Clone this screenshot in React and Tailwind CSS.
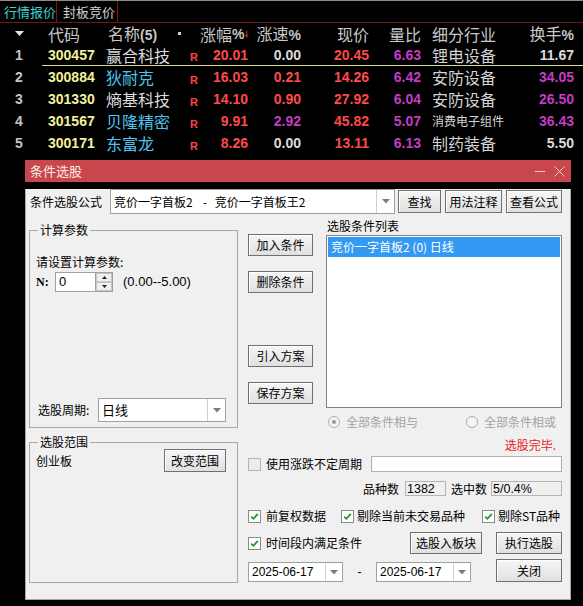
import React from 'react';

const W = 'text-[#dcdcdc]';
const RED = 'text-[#ff4a4a]';
const MAG = 'text-[#c43cc4]';
const CY = 'text-[#4cc4ee]';
const NUM = "font-['Liberation_Sans',sans-serif] font-bold text-[14px]";
const CJK = "font-['Noto_Sans_CJK_SC',sans-serif]";

const rows = [
  { n: 1, code: '300457', name: '赢合科技', nc: W, zf: '20.01', zs: '0.00', zsc: W, xj: '20.45', lb: '6.63', hy: '锂电设备', hs: '11.67', hsc: W },
  { n: 2, code: '300884', name: '狄耐克', nc: CY, zf: '16.03', zs: '0.21', zsc: RED, xj: '14.26', lb: '6.42', hy: '安防设备', hs: '34.05', hsc: MAG },
  { n: 3, code: '301330', name: '熵基科技', nc: W, zf: '14.10', zs: '0.90', zsc: RED, xj: '27.92', lb: '6.04', hy: '安防设备', hs: '26.50', hsc: MAG },
  { n: 4, code: '301567', name: '贝隆精密', nc: CY, zf: '9.91', zs: '2.92', zsc: MAG, xj: '45.82', lb: '5.07', hy: '消费电子组件', small: true, hs: '36.43', hsc: MAG },
  { n: 5, code: '300171', name: '东富龙', nc: CY, zf: '8.26', zs: '0.00', zsc: W, xj: '13.11', lb: '6.13', hy: '制药装备', hs: '5.50', hsc: W },
];

function DropArrow() {
  return (
    <svg width="8" height="5" viewBox="0 0 8 5">
      <polygon points="0,0 8,0 4,4.5" fill="#7c7c7c" />
    </svg>
  );
}

function Btn({ className = '', children }) {
  return (
    <div
      className={`flex items-center justify-center border border-[#707070] bg-linear-to-b from-[#f6f6f6] to-[#e0e0e0] text-[12px] leading-[16px] text-black shadow-[inset_1px_1px_0_#ffffff] ${className}`}
    >
      {children}
    </div>
  );
}

function Check({ checked }) {
  return (
    <div
      className={`flex h-[13px] w-[13px] shrink-0 items-center justify-center border ${
        checked ? 'border-[#8a8a8a] bg-white' : 'border-[#b4b4b4] bg-[#ececec]'
      }`}
    >
      {checked && (
        <svg width="9" height="9" viewBox="0 0 9 9">
          <path d="M1.2 4.6 L3.4 6.8 L7.8 1.8" stroke="#1f9a2a" strokeWidth="1.8" fill="none" />
        </svg>
      )}
    </div>
  );
}

function Radio({ dot }) {
  return (
    <div className="flex h-[12px] w-[12px] shrink-0 items-center justify-center rounded-full border border-[#b0b0b0] bg-[#f4f4f4]">
      {dot && <div className="h-[4px] w-[4px] rounded-full bg-[#9a9a9a]" />}
    </div>
  );
}

function Combo({ className = '', text, textClass = '' }) {
  return (
    <div className={`flex border border-[#a0a0a0] bg-white ${className}`}>
      <div className={`flex flex-1 items-center overflow-hidden whitespace-nowrap pl-[3px] text-[12px] leading-[16px] text-black ${textClass}`}>
        {text}
      </div>
      <div className="flex w-[18px] items-center justify-center border-l border-[#cfcfcf]">
        <DropArrow />
      </div>
    </div>
  );
}

function DateBox() {
  return (
    <div className="flex h-[20px] w-[95px] border border-[#a0a0a0] bg-white">
      <div className="flex flex-1 items-center pl-[3px] font-['Liberation_Sans',sans-serif] text-[12px] leading-[16px] text-black">
        2025-06-17
      </div>
      <div className="flex w-[17px] items-center justify-center border-l border-[#cfcfcf]">
        <DropArrow />
      </div>
    </div>
  );
}

export default function App() {
  return (
    <div className={`h-[606px] w-[583px] overflow-hidden bg-black ${CJK}`}>
      {/* top line */}
      <div className="h-[1px] bg-[#8c8c8c]" />
      {/* tabs */}
      <div className="flex h-[22px] border-b border-[#7a1414] text-[13px] leading-[18px]">
        <div className="flex w-[57px] items-center border-r border-[#7a1414] pl-[4px] text-[#3fd0d0]">行情报价</div>
        <div className="flex w-[61px] items-center border-r border-[#7a1414] pl-[6px] text-[#d0d0d0]">封板竞价</div>
      </div>
      {/* header */}
      <div className="flex h-[21px] items-center text-[16px] leading-[20px] text-[#c8c8c8]">
        <div className="flex w-[42px] justify-center pr-[4px]">
          <svg width="9" height="5" viewBox="0 0 9 5">
            <polygon points="0,0 9,0 4.5,5" fill="#e6e6e6" />
          </svg>
        </div>
        <div className="w-[58px] pl-[6px]">代码</div>
        <div className="w-[76px] whitespace-nowrap pl-[8px]">
          名称<span className={NUM}>(5)</span>
        </div>
        <div className="flex w-[24px] items-center pl-[2px]">
          <div className="h-[3px] w-[3px] bg-[#d0d0d0]" />
        </div>
        <div className="flex w-[50px] items-center justify-end whitespace-nowrap pr-[1px]">
          涨幅<span className={NUM}>%</span>
          <svg width="6" height="12" viewBox="0 0 6 12" className="ml-[1px]">
            <path d="M3 0 V11 M0.5 7.5 L3 11 L5.5 7.5" stroke="#ff3a3a" strokeWidth="1.3" fill="none" />
          </svg>
        </div>
        <div className="w-[51px] whitespace-nowrap text-right">
          涨速<span className={NUM}>%</span>
        </div>
        <div className="w-[68px] text-right">现价</div>
        <div className="w-[52px] text-right">量比</div>
        <div className="w-[79px] whitespace-nowrap pl-[11px]">细分行业</div>
        <div className="w-[74px] whitespace-nowrap text-right">
          换手<span className={NUM}>%</span>
        </div>
      </div>
      {/* rows */}
      {rows.map((r) => (
        <div key={r.n} className="flex h-[22px] leading-[20px]">
          <div className={`flex w-[42px] items-center justify-center pr-[4px] text-[#c4c4c4] ${NUM}`}>{r.n}</div>
          <div className={`flex flex-1 items-center ${r.n === 1 ? 'border-b border-[#d8d890]' : ''}`}>
            <div className={`w-[58px] pl-[6px] text-[#f2f29a] ${NUM}`}>{r.code}</div>
            <div className={`w-[76px] whitespace-nowrap pl-[6px] text-[16px] ${r.nc}`}>{r.name}</div>
            <div className="w-[24px] pl-[14px] pt-[5px] font-['Liberation_Sans',sans-serif] text-[11px] font-bold leading-[14px] text-[#ff4040]">R</div>
            <div className={`w-[50px] pr-[2px] text-right ${RED} ${NUM}`}>{r.zf}</div>
            <div className={`w-[51px] text-right ${r.zsc} ${NUM}`}>{r.zs}</div>
            <div className={`w-[68px] text-right ${RED} ${NUM}`}>{r.xj}</div>
            <div className={`w-[52px] text-right ${MAG} ${NUM}`}>{r.lb}</div>
            <div className={`w-[79px] whitespace-nowrap pl-[11px] text-[#d4d4d4] ${r.small ? 'text-[12px]' : 'text-[16px]'}`}>{r.hy}</div>
            <div className={`w-[74px] text-right ${r.hsc} ${NUM}`}>{r.hs}</div>
          </div>
        </div>
      ))}

      {/* dialog */}
      <div className="ml-[25px] mt-[6px] w-[546px]">
        <div className="flex h-[22px] items-center justify-between bg-[#c9474c] pl-[5px] pr-[6px]">
          <div className="text-[13px] leading-[18px] text-[#fbeaea]">条件选股</div>
          <div className="flex items-center gap-[9px]">
            <div className="h-[1px] w-[10px] bg-[#f5c8ca]" />
            <svg width="11" height="11" viewBox="0 0 11 11">
              <path d="M0.5 0.5 L10.5 10.5 M10.5 0.5 L0.5 10.5" stroke="#f5c8ca" strokeWidth="1" />
            </svg>
          </div>
        </div>
        <div className="h-[411px] border-x border-b border-[#a8a8a8] bg-[#f0f0f0] text-[12px] leading-[16px] text-black">
          {/* row 1 */}
          <div className="mt-[7px] flex h-[25px] items-center pl-[4px]">
            <div className="w-[80px] whitespace-nowrap">条件选股公式</div>
            <Combo
              className="h-[25px] w-[285px]"
              text={
                <span className="whitespace-pre">
                  竞价一字首板2<span className="ml-[10px]">-</span>
                  <span className="ml-[8px]">竞价一字首板王2</span>
                </span>
              }
            />
            <Btn className="ml-[3px] h-[23px] w-[43px]">查找</Btn>
            <Btn className="ml-[4px] h-[23px] w-[57px]">用法注释</Btn>
            <Btn className="ml-[4px] h-[23px] w-[56px]">查看公式</Btn>
          </div>

          <div className="flex pl-[3px]">
            {/* left column */}
            <div className="w-[209px]">
              <fieldset className="mt-[8px] h-[206px] border border-[#a8a8a8] pl-[6px]">
                <legend className="ml-[2px] px-[2px] leading-[16px]">计算参数</legend>
                <div className="mt-[16px] h-[16px] leading-[16px]">请设置计算参数:</div>
                <div className="mt-[2px] flex h-[20px] items-center">
                  <div className="w-[19px] font-['Liberation_Serif',serif] text-[12px] font-bold">N:</div>
                  <div className="flex h-[20px]">
                    <div className="flex w-[41px] items-center border border-[#a0a0a0] bg-white pl-[3px] font-['Liberation_Sans',sans-serif] text-[13px]">0</div>
                    <div className="flex w-[17px] flex-col border-y border-r border-[#a0a0a0] bg-white">
                      <div className="flex flex-1 items-center justify-center border border-[#c4c4c4] bg-[#efefef]">
                        <svg width="5" height="3" viewBox="0 0 5 3"><polygon points="0,3 5,3 2.5,0" fill="#222" /></svg>
                      </div>
                      <div className="flex flex-1 items-center justify-center border border-[#c4c4c4] bg-[#efefef]">
                        <svg width="5" height="3" viewBox="0 0 5 3"><polygon points="0,0 5,0 2.5,3" fill="#222" /></svg>
                      </div>
                    </div>
                  </div>
                  <div className="ml-[10px] font-['Liberation_Sans',sans-serif] text-[13px]">(0.00--5.00)</div>
                </div>
                <div className="mt-[106px] flex h-[24px] items-center pl-[2px]">
                  <div className="w-[60px] whitespace-nowrap">选股周期:</div>
                  <Combo className="h-[24px] w-[128px]" text="日线" textClass="text-[13px]" />
                </div>
              </fieldset>
              <fieldset className="mt-[7px] h-[148px] border border-[#a8a8a8] pl-[6px] pr-[11px]">
                <legend className="ml-[2px] px-[2px] leading-[14px]">选股范围</legend>
                <div className="flex h-[23px] items-center justify-between">
                  <div>创业板</div>
                  <Btn className="h-[23px] w-[62px]">改变范围</Btn>
                </div>
              </fieldset>
            </div>

            {/* right area */}
            <div className="ml-[10px] w-[314px]">
              <div className="flex h-[216px]">
                <div className="w-[65px] pt-[20px]">
                  <Btn className="h-[22px] w-[65px]">加入条件</Btn>
                  <Btn className="mt-[15px] h-[22px] w-[65px]">删除条件</Btn>
                  <Btn className="mt-[52px] h-[22px] w-[65px]">引入方案</Btn>
                  <Btn className="mt-[15px] h-[22px] w-[65px]">保存方案</Btn>
                </div>
                <div className="ml-[13px] w-[236px]">
                  <div className="mt-[4px] h-[16px] pl-[1px] leading-[16px]">选股条件列表</div>
                  <div className="mt-[1px] h-[173px] border border-[#828282] bg-white p-[1px]">
                    <div className="flex h-[20px] items-center bg-[#3399f3] pl-[3px] text-[12px] text-white">
                      竞价一字首板2 (0) 日线
                    </div>
                  </div>
                  <div className="mt-[6px] flex h-[16px] items-center text-[#a3a3a3]">
                    <div className="flex w-[140px] items-center pl-[2px]">
                      <Radio dot />
                      <span className="ml-[6px]">全部条件相与</span>
                    </div>
                    <div className="flex items-center">
                      <Radio />
                      <span className="ml-[6px]">全部条件相或</span>
                    </div>
                  </div>
                </div>
              </div>

              <div className="mt-[7px] h-[16px] pr-[6px] text-right leading-[16px] text-[#e82020]">选股完毕.</div>

              <div className="mt-[3px] flex h-[16px] items-center">
                <Check />
                <span className="ml-[5px] whitespace-nowrap">使用涨跌不定周期</span>
                <div className="ml-auto h-[16px] w-[191px] border border-[#b0b0b0] bg-white" />
              </div>

              <div className="mt-[9px] flex h-[15px] items-center justify-end">
                <span>品种数</span>
                <div className="ml-[6px] flex h-[15px] w-[41px] items-center border border-[#b4b4b4] bg-[#f0f0f0] pl-[1px] font-['Liberation_Sans',sans-serif] text-[12.5px]">1382</div>
                <span className="ml-[5px]">选中数</span>
                <div className="ml-[4px] flex h-[15px] w-[71px] items-center border border-[#b4b4b4] bg-[#f0f0f0] pl-[1px] font-['Liberation_Sans',sans-serif] text-[12.5px]">5/0.4%</div>
              </div>

              <div className="mt-[12px] flex h-[16px] items-center">
                <div className="flex w-[93px] items-center">
                  <Check checked />
                  <span className="ml-[5px] whitespace-nowrap">前复权数据</span>
                </div>
                <div className="flex w-[141px] items-center">
                  <Check checked />
                  <span className="ml-[3px] whitespace-nowrap">剔除当前未交易品种</span>
                </div>
                <div className="flex items-center">
                  <Check checked />
                  <span className="ml-[3px] whitespace-nowrap">剔除ST品种</span>
                </div>
              </div>

              <div className="mt-[8px] flex h-[22px] items-center">
                <Check checked />
                <span className="ml-[5px] whitespace-nowrap">时间段内满足条件</span>
                <Btn className="ml-auto h-[22px] w-[72px]">选股入板块</Btn>
                <Btn className="ml-[14px] h-[22px] w-[66px]">执行选股</Btn>
              </div>

              <div className="mt-[5px] flex h-[23px] items-end">
                <DateBox />
                <div className="flex h-[20px] w-[33px] items-center justify-center font-['Liberation_Sans',sans-serif]">-</div>
                <DateBox />
                <Btn className="ml-auto h-[23px] w-[66px]">关闭</Btn>
              </div>
            </div>
          </div>
        </div>
      </div>
    </div>
  );
}
